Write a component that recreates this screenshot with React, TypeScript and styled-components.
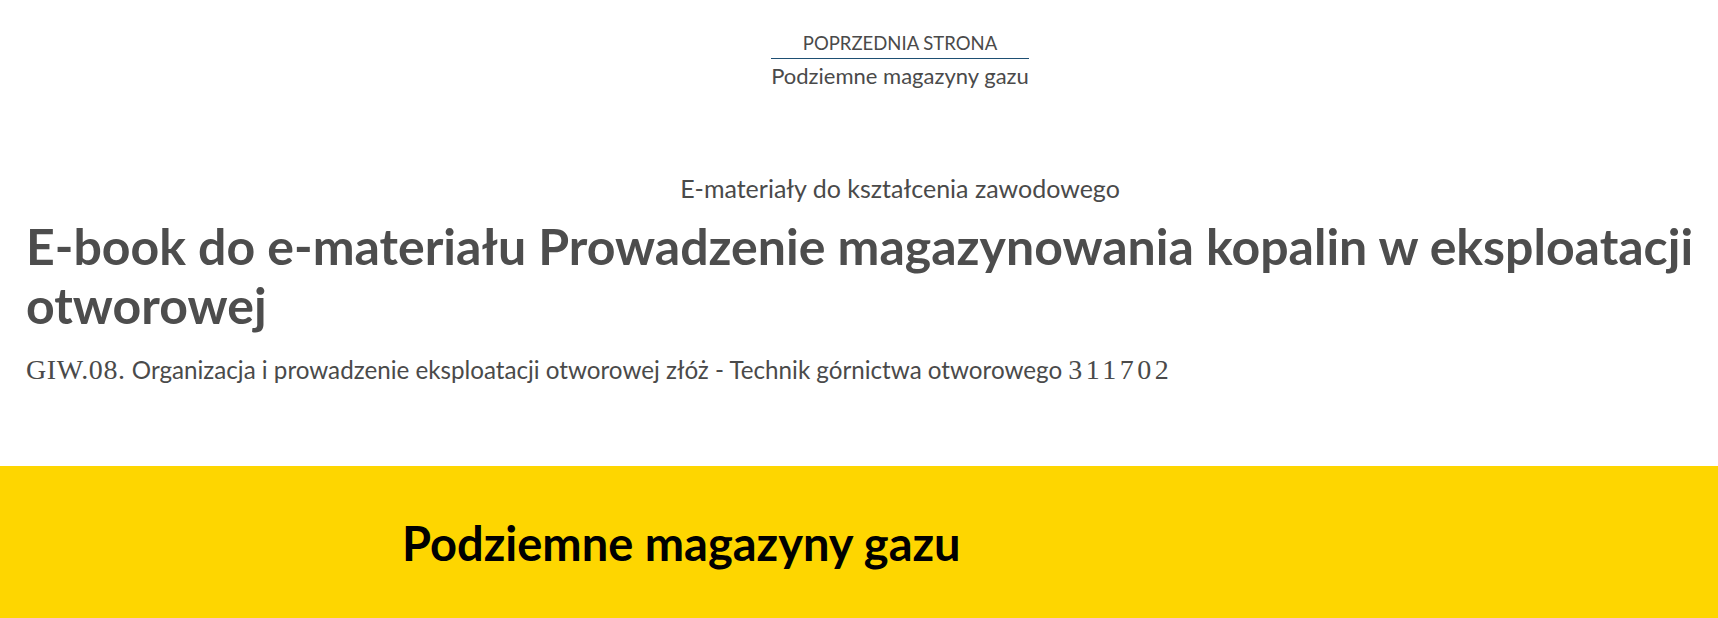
import React from "react";
import styled, { createGlobalStyle } from "styled-components";

const GlobalStyle = createGlobalStyle`
  html, body {
    margin: 0;
    padding: 0;
    background: #ffffff;
    font-family: Lato, "Noto Sans", sans-serif;
    color: #4a4a4a;
  }
`;

const Page = styled.div`
  width: 1718px;
  height: 618px;
  overflow: hidden;
  display: flex;
  flex-direction: column;
`;

const TopNav = styled.nav`
  display: flex;
  justify-content: center;
  padding: 31px 0 0 82px;
`;

const BackLink = styled.a`
  display: inline-flex;
  flex-direction: column;
  align-items: center;
  text-decoration: none;
  color: #4a4a4a;
  cursor: pointer;
`;

const BackLabel = styled.span`
  font-size: 18.5px;
  line-height: 24px;
  text-transform: uppercase;
  padding-bottom: 3px;
  border-bottom: 1px solid #1e4f73;
  align-self: stretch;
  text-align: center;
`;

const BackTitle = styled.span`
  margin-top: 3px;
  font-size: 22px;
  line-height: 28px;
`;

const Header = styled.header`
  display: flex;
  flex-direction: column;
  padding: 83px 10px 0 26px;
`;

const Kicker = styled.p`
  margin: 0 0 0 66px;
  text-align: center;
  font-size: 25px;
  line-height: 30px;
`;

const Title = styled.h1`
  margin: 14px 0 0;
  font-size: 50px;
  line-height: 59px;
  font-weight: 700;
  color: #4d4d4d;
`;

const Subtitle = styled.p`
  margin: 20px 0 0;
  font-size: 24.2px;
  line-height: 30px;
`;

const Code = styled.span<{ $spacing: number }>`
  font-family: "Liberation Serif", "DejaVu Serif", serif;
  font-size: 28px;
  letter-spacing: ${(p) => p.$spacing}px;
`;

const Band = styled.section`
  margin-top: 81px;
  flex: 1;
  background: #fed600;
  padding: 49px 0 0 402px;
`;

const BandTitle = styled.h2`
  margin: 0;
  font-size: 47px;
  line-height: 56px;
  font-weight: 700;
  color: #000000;
`;

export default function App() {
  return (
    <Page>
      <GlobalStyle />
      <TopNav>
        <BackLink>
          <BackLabel>Poprzednia strona</BackLabel>
          <BackTitle>Podziemne magazyny gazu</BackTitle>
        </BackLink>
      </TopNav>
      <Header>
        <Kicker>E-materiały do kształcenia zawodowego</Kicker>
        <Title>
          E-book do e-materiału Prowadzenie magazynowania kopalin w eksploatacji otworowej
        </Title>
        <Subtitle>
          <Code $spacing={0.6}>GIW.08.</Code> Organizacja i prowadzenie eksploatacji otworowej złóż -
          Technik górnictwa otworowego <Code $spacing={3.5}>311702</Code>
        </Subtitle>
      </Header>
      <Band>
        <BandTitle>Podziemne magazyny gazu</BandTitle>
      </Band>
    </Page>
  );
}
